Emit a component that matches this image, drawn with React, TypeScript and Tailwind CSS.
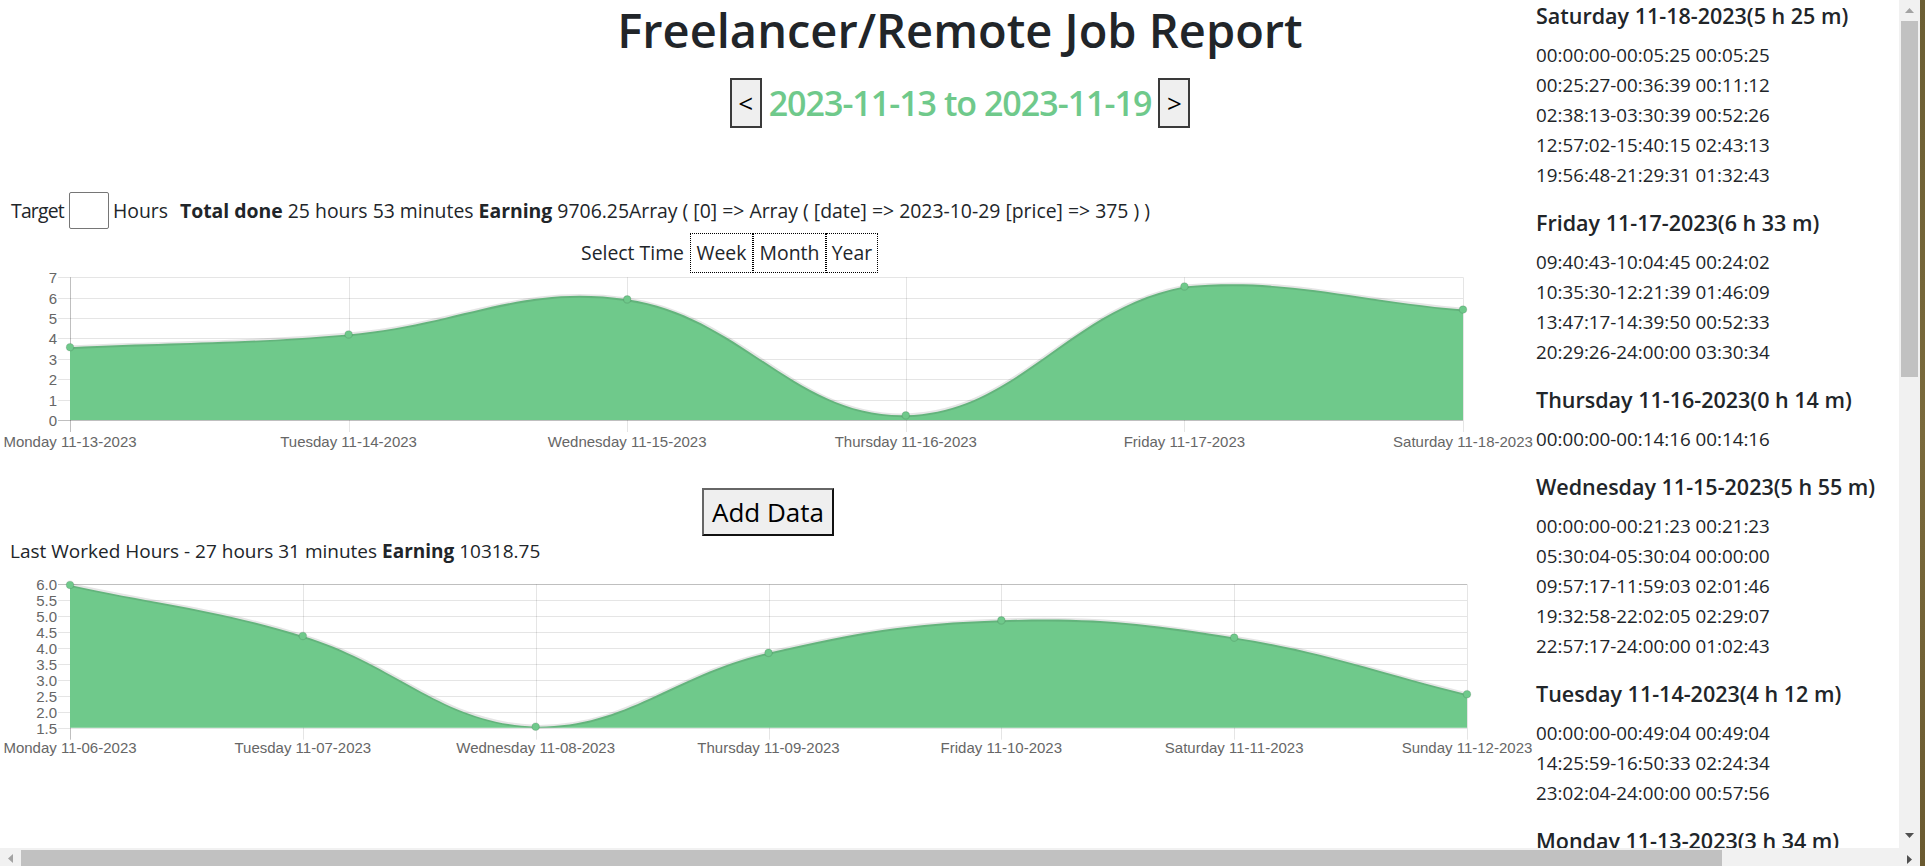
import React from "react";

type Pt = { x: number; y: number };

const GREEN = "#6fc98b";

function controlPoints(pts: Pt[], t: number) {
  return pts.map((cur, i) => {
    const prev = i > 0 ? pts[i - 1] : cur;
    const next = i < pts.length - 1 ? pts[i + 1] : cur;
    const d01 = Math.hypot(cur.x - prev.x, cur.y - prev.y);
    const d12 = Math.hypot(next.x - cur.x, next.y - cur.y);
    let s01 = d01 / (d01 + d12);
    let s12 = d12 / (d01 + d12);
    if (isNaN(s01)) s01 = 0;
    if (isNaN(s12)) s12 = 0;
    const fa = t * s01;
    const fb = t * s12;
    return {
      prev: { x: cur.x - fa * (next.x - prev.x), y: cur.y - fa * (next.y - prev.y) },
      next: { x: cur.x + fb * (next.x - prev.x), y: cur.y + fb * (next.y - prev.y) },
    };
  });
}

type ChartProps = {
  height: number;
  left: number;
  right: number;
  top: number;
  bottom: number;
  labelBaseline: number;
  labels: string[];
  values: number[];
  min: number;
  max: number;
  step: number;
  decimals: number;
};

function AreaChart({ height, left, right, top, bottom, labelBaseline, labels, values, min, max, step, decimals }: ChartProps) {
  const n = labels.length;
  const xs = labels.map((_, i) => left + ((right - left) * i) / (n - 1));
  const yOf = (v: number) => bottom - ((v - min) / (max - min)) * (bottom - top);
  const pts: Pt[] = values.map((v, i) => ({ x: xs[i], y: yOf(v) }));
  const cps = controlPoints(pts, 0.4).map((c) => ({
    prev: { x: Math.min(Math.max(c.prev.x, left), right), y: Math.min(Math.max(c.prev.y, top), bottom) },
    next: { x: Math.min(Math.max(c.next.x, left), right), y: Math.min(Math.max(c.next.y, top), bottom) },
  }));
  let line = `M ${pts[0].x} ${pts[0].y}`;
  for (let i = 1; i < pts.length; i++) {
    line += ` C ${cps[i - 1].next.x} ${cps[i - 1].next.y} ${cps[i].prev.x} ${cps[i].prev.y} ${pts[i].x} ${pts[i].y}`;
  }
  const area = `${line} L ${pts[pts.length - 1].x} ${bottom} L ${pts[0].x} ${bottom} Z`;
  const ticks: number[] = [];
  for (let v = max; v >= min - 1e-9; v -= step) ticks.push(Math.round(v * 100) / 100);
  const zeroIdx = ticks.findIndex((v) => v === 0);
  const zi = zeroIdx >= 0 ? zeroIdx : 0;
  return (
    <svg width={1536} height={height} className="block overflow-visible">
      {ticks.map((v, i) => {
        const y = Math.round(yOf(v)) + 0.5;
        return (
          <g key={"h" + i}>
            <line x1={left - 12} x2={right} y1={y} y2={y} stroke={i === zi ? "rgba(0,0,0,0.25)" : "rgba(0,0,0,0.1)"} strokeWidth={1} />
            <text x={left - 13} y={y + 5} textAnchor="end" fontFamily="'Liberation Sans', Arial, sans-serif" fontSize={15} fill="#666">
              {v.toFixed(decimals)}
            </text>
          </g>
        );
      })}
      {xs.map((x, i) => {
        const xx = Math.round(x) + 0.5;
        return (
          <g key={"v" + i}>
            <line x1={xx} x2={xx} y1={top} y2={bottom + 12} stroke={i === 0 ? "rgba(0,0,0,0.25)" : "rgba(0,0,0,0.1)"} strokeWidth={1} />
            <text x={x} y={labelBaseline} textAnchor="middle" fontFamily="'Liberation Sans', Arial, sans-serif" fontSize={15} fill="#666">
              {labels[i]}
            </text>
          </g>
        );
      })}
      <path d={area} fill={GREEN} />
      <path d={line} fill="none" stroke="rgba(0,0,0,0.1)" strokeWidth={3.75} />
      {pts.map((p, i) => (
        <circle key={"p" + i} cx={p.x} cy={p.y} r={3.75} fill={GREEN} stroke="rgba(0,0,0,0.1)" strokeWidth={1.25} />
      ))}
    </svg>
  );
}

const days: { title: string; items: string[] }[] = [
  {
    title: "Saturday 11-18-2023(5 h 25 m)",
    items: [
      "00:00:00-00:05:25 00:05:25",
      "00:25:27-00:36:39 00:11:12",
      "02:38:13-03:30:39 00:52:26",
      "12:57:02-15:40:15 02:43:13",
      "19:56:48-21:29:31 01:32:43",
    ],
  },
  {
    title: "Friday 11-17-2023(6 h 33 m)",
    items: [
      "09:40:43-10:04:45 00:24:02",
      "10:35:30-12:21:39 01:46:09",
      "13:47:17-14:39:50 00:52:33",
      "20:29:26-24:00:00 03:30:34",
    ],
  },
  { title: "Thursday 11-16-2023(0 h 14 m)", items: ["00:00:00-00:14:16 00:14:16"] },
  {
    title: "Wednesday 11-15-2023(5 h 55 m)",
    items: [
      "00:00:00-00:21:23 00:21:23",
      "05:30:04-05:30:04 00:00:00",
      "09:57:17-11:59:03 02:01:46",
      "19:32:58-22:02:05 02:29:07",
      "22:57:17-24:00:00 01:02:43",
    ],
  },
  {
    title: "Tuesday 11-14-2023(4 h 12 m)",
    items: ["00:00:00-00:49:04 00:49:04", "14:25:59-16:50:33 02:24:34", "23:02:04-24:00:00 00:57:56"],
  },
  {
    title: "Monday 11-13-2023(3 h 34 m)",
    items: ["00:00:00-00:31:12 00:31:12", "10:12:40-13:15:22 03:02:42"],
  },
];

function Triangle({ dir, color }: { dir: "up" | "down" | "left" | "right"; color: string }) {
  const d =
    dir === "up"
      ? "M0 5 L4.5 0 L9 5 Z"
      : dir === "down"
      ? "M0 0 L9 0 L4.5 5 Z"
      : dir === "left"
      ? "M5 0 L5 9 L0 4.5 Z"
      : "M0 0 L5 4.5 L0 9 Z";
  const w = dir === "up" || dir === "down" ? 9 : 5;
  const h = dir === "up" || dir === "down" ? 5 : 9;
  return (
    <svg width={w} height={h} className="block">
      <path d={d} fill={color} />
    </svg>
  );
}

export default function App() {
  return (
    <div className="flex h-[866px] w-[1925px] overflow-hidden bg-white font-['Open_Sans',sans-serif] text-[#212529]">
      <div className="flex w-[1920px] flex-col">
        <div className="flex h-[848px]">
          <div className="flex w-[1899px] overflow-hidden">
            {/* main column */}
            <div className="w-[1536px] shrink-0">
              <div className="pl-[384px]">
                <h1 className="text-center text-[47px] font-semibold leading-[60px]">Freelancer/Remote Job Report</h1>
                <div className="mt-[18px] flex h-[50px] items-center justify-center gap-[7px]">
                  <button className="flex h-[50px] w-[32px] items-center justify-center border-2 border-[#3a3a3a] bg-[#efefef] text-[26px] leading-none text-black">
                    &lt;
                  </button>
                  <span className="text-[34px] font-semibold leading-[48px] tracking-[-1px] text-[#6fc98b]">2023-11-13 to 2023-11-19</span>
                  <button className="flex h-[50px] w-[32px] items-center justify-center border-2 border-[#3a3a3a] bg-[#efefef] text-[26px] leading-none text-black">
                    &gt;
                  </button>
                </div>
              </div>

              <div className="mt-[64px] flex h-[37px] items-center whitespace-nowrap pl-[11px] text-[19.4px] leading-[30px]">
                <span className="tracking-[-0.8px]">Target</span>
                <span className="ml-[5px] mr-[4px] block h-[37px] w-[40px] rounded-[2px] border border-[#767676] bg-white" />
                <span>Hours</span>
                <span className="ml-[12px]">
                  <b className="font-bold">Total done</b> 25 hours 53 minutes <b className="font-bold">Earning</b> 9706.25Array ( [0] =&gt; Array ( [date] =&gt; 2023-10-29 [price] =&gt; 375 ) )
                </span>
              </div>

              <div className="mt-[4px] flex h-[40px] items-center text-[19.4px]">
                <span className="w-[690px] pr-[6px] text-right">Select Time</span>
                <span className="flex h-[40px] w-[63px] items-center justify-center border border-dotted border-black">Week</span>
                <span className="flex h-[40px] w-[73px] items-center justify-center border border-dotted border-black">Month</span>
                <span className="flex h-[40px] w-[52px] items-center justify-center border border-dotted border-black">Year</span>
              </div>

              <AreaChart
                height={183}
                left={70}
                right={1463}
                top={4.3}
                bottom={147}
                labelBaseline={174}
                labels={[
                  "Monday 11-13-2023",
                  "Tuesday 11-14-2023",
                  "Wednesday 11-15-2023",
                  "Thursday 11-16-2023",
                  "Friday 11-17-2023",
                  "Saturday 11-18-2023",
                ]}
                values={[3.57, 4.2, 5.92, 0.23, 6.55, 5.42]}
                min={0}
                max={7}
                step={1}
                decimals={0}
              />

              <div className="mt-[32px] flex justify-center">
                <button className="h-[48px] w-[132px] border-2 border-b-[#111] border-l-[#666] border-r-[#111] border-t-[#666] bg-[#efefef] text-[26px] leading-none text-black">
                  Add Data
                </button>
              </div>

              <div className="h-[30px] whitespace-nowrap pl-[10px] text-[19px] leading-[30px]">
                Last Worked Hours - 27 hours 31 minutes <b className="font-bold">Earning</b> 10318.75
              </div>

              <AreaChart
                height={195}
                left={70}
                right={1467}
                top={18.3}
                bottom={161.7}
                labelBaseline={187}
                labels={[
                  "Monday 11-06-2023",
                  "Tuesday 11-07-2023",
                  "Wednesday 11-08-2023",
                  "Thursday 11-09-2023",
                  "Friday 11-10-2023",
                  "Saturday 11-11-2023",
                  "Sunday 11-12-2023",
                ]}
                values={[5.98, 4.38, 1.53, 3.85, 4.87, 4.33, 2.55]}
                min={1.5}
                max={6}
                step={0.5}
                decimals={1}
              />
            </div>

            {/* sidebar */}
            <div className="mt-[1px] flex-1 whitespace-nowrap">
              {days.map((d) => (
                <div key={d.title} className="mb-[18px]">
                  <h5 className="mb-[9px] h-[30px] text-[21.5px] font-semibold leading-[30px]">{d.title}</h5>
                  {d.items.map((it) => (
                    <div key={it} className="h-[30px] text-[18.8px] leading-[30px]">
                      {it}
                    </div>
                  ))}
                </div>
              ))}
            </div>
          </div>

          {/* vertical scrollbar */}
          <div className="flex w-[21px] flex-col bg-[#f1f1f1]">
            <div className="flex h-[21px] items-center justify-center">
              <Triangle dir="up" color="#a3a3a3" />
            </div>
            <div className="mx-[2px] h-[356px] bg-[#c1c1c1]" />
            <div className="flex-1" />
            <div className="flex h-[21px] items-center justify-center pb-[4px]">
              <Triangle dir="down" color="#505050" />
            </div>
          </div>
        </div>

        {/* horizontal scrollbar */}
        <div className="flex h-[18px] bg-[#f1f1f1]">
          <div className="flex w-[21px] items-center justify-center pt-[2px]">
            <Triangle dir="left" color="#a3a3a3" />
          </div>
          <div className="mt-[2px] w-[1701px] bg-[#c1c1c1]" />
          <div className="flex-1" />
          <div className="flex w-[21px] items-center justify-center pt-[4px]">
            <Triangle dir="right" color="#505050" />
          </div>
        </div>
      </div>
      <div className="w-[5px] bg-gradient-to-b from-[#6b5e33] via-[#7a6a3c] to-[#6a5a30]" />
    </div>
  );
}
